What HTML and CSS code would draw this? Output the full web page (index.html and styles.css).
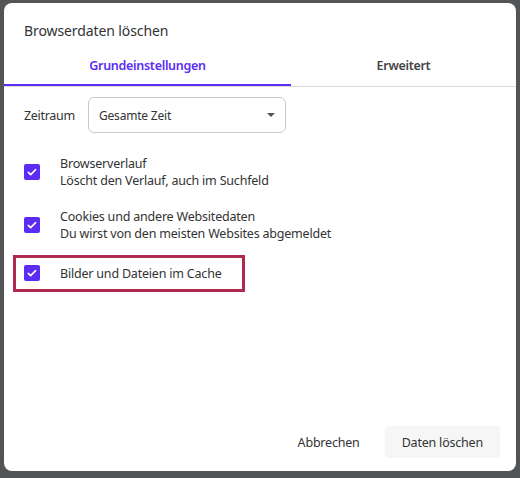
FILE: index.html
```html
<!DOCTYPE html>
<html lang="de">
<head>
<meta charset="utf-8">
<title>Browserdaten löschen</title>
<link rel="stylesheet" href="styles.css">
</head>
<body>
<div class="dialog">
  <h1 class="title">Browserdaten löschen</h1>
  <div class="tabs">
    <div class="tab tab-active">Grundeinstellungen</div>
    <div class="tab">Erweitert</div>
  </div>
  <div class="range">
    <span class="range-label">Zeitraum</span>
    <div class="select">
      <span>Gesamte Zeit</span>
      <span class="arrow"></span>
    </div>
  </div>
  <div class="list">
    <div class="row">
      <span class="check"><svg viewBox="0 0 16 16" width="16" height="16"><path d="M4.3 8.3l2.4 2.3 4.9-5" fill="none" stroke="#fff" stroke-width="1.6" stroke-linecap="round" stroke-linejoin="round"/></svg></span>
      <div class="label">
        <div>Browserverlauf</div>
        <div>Löscht den Verlauf, auch im Suchfeld</div>
      </div>
    </div>
    <div class="row">
      <span class="check"><svg viewBox="0 0 16 16" width="16" height="16"><path d="M4.3 8.3l2.4 2.3 4.9-5" fill="none" stroke="#fff" stroke-width="1.6" stroke-linecap="round" stroke-linejoin="round"/></svg></span>
      <div class="label">
        <div>Cookies und andere Websitedaten</div>
        <div>Du wirst von den meisten Websites abgemeldet</div>
      </div>
    </div>
    <div class="row row-marked">
      <span class="check"><svg viewBox="0 0 16 16" width="16" height="16"><path d="M4.3 8.3l2.4 2.3 4.9-5" fill="none" stroke="#fff" stroke-width="1.6" stroke-linecap="round" stroke-linejoin="round"/></svg></span>
      <div class="label">
        <div>Bilder und Dateien im Cache</div>
      </div>
      <span class="highlight"></span>
    </div>
  </div>
  <div class="actions">
    <button class="btn">Abbrechen</button>
    <button class="btn btn-primary">Daten löschen</button>
  </div>
</div>
</body>
</html>
```

FILE: styles.css
```css
html, body {
  margin: 0;
  padding: 0;
}
body {
  background: #535456;
  font-family: "Noto Sans", "Open Sans", sans-serif;
  color: #333;
  width: 520px;
  height: 478px;
  overflow: hidden;
}
.dialog {
  margin: 3px 0 0 4px;
  width: 512px;
  height: 468px;
  background: #fff;
  border-radius: 8px;
  display: flex;
  flex-direction: column;
  padding-top: 18px;
  box-sizing: border-box;
}
.title {
  margin: 0;
  padding: 0 20px;
  font-size: 14px;
  letter-spacing: -0.1px;
  line-height: 20px;
  font-weight: 400;
  color: #333;
}
.tabs {
  margin-top: 7px;
  display: flex;
  border-bottom: 1px solid #dcdcdc;
}
.tab {
  padding: 9px 0;
  line-height: 18px;
  font-size: 12.5px;
  letter-spacing: -0.3px;
  font-weight: 600;
  color: #454545;
  text-align: center;
  border-bottom: 2px solid transparent;
  flex: 1;
}
.tab-active {
  flex: 0 0 287px;
  color: #5a2cf5;
  border-bottom-color: #5a2cf5;
}
.range {
  display: flex;
  align-items: center;
  padding: 10px 0 0 20px;
}
.range-label {
  width: 64px;
  font-size: 12.5px;
  letter-spacing: -0.3px;
  color: #333;
}
.select {
  width: 198px;
  height: 36px;
  box-sizing: border-box;
  border: 1px solid #c9c9c9;
  border-radius: 6px;
  display: flex;
  align-items: center;
  justify-content: space-between;
  padding: 0 10px 0 10px;
  font-size: 12px;
  letter-spacing: -0.2px;
  color: #333;
}
.arrow {
  width: 0;
  height: 0;
  border-left: 4px solid transparent;
  border-right: 4px solid transparent;
  border-top: 4px solid #555;
  margin-right: 0;
}
.list {
  margin-top: 22px;
  padding: 0 20px;
  display: flex;
  flex-direction: column;
  gap: 19px;
}
.row {
  display: flex;
  align-items: center;
  min-height: 24px;
  position: relative;
}
.check {
  width: 16px;
  height: 16px;
  border-radius: 2px;
  background: #5a2cf5;
  display: flex;
  flex: 0 0 16px;
  margin-right: 20px;
}
.label {
  font-size: 12.5px;
  letter-spacing: -0.2px;
  line-height: 17px;
  color: #333;
}
.highlight {
  position: absolute;
  left: -11px;
  top: -6px;
  width: 232px;
  height: 37px;
  box-sizing: border-box;
  border: 3px solid #b02a4f;
}
.actions {
  margin-top: auto;
  display: flex;
  justify-content: flex-end;
  gap: 8px;
  padding: 0 16px 13px 0;
}
.btn {
  font-family: inherit;
  font-size: 12.5px;
  letter-spacing: -0.2px;
  color: #333;
  background: transparent;
  border: 0;
  border-radius: 4px;
  height: 32px;
  padding: 0 17px;
}
.btn-primary {
  background: #f6f6f6;
}
```
